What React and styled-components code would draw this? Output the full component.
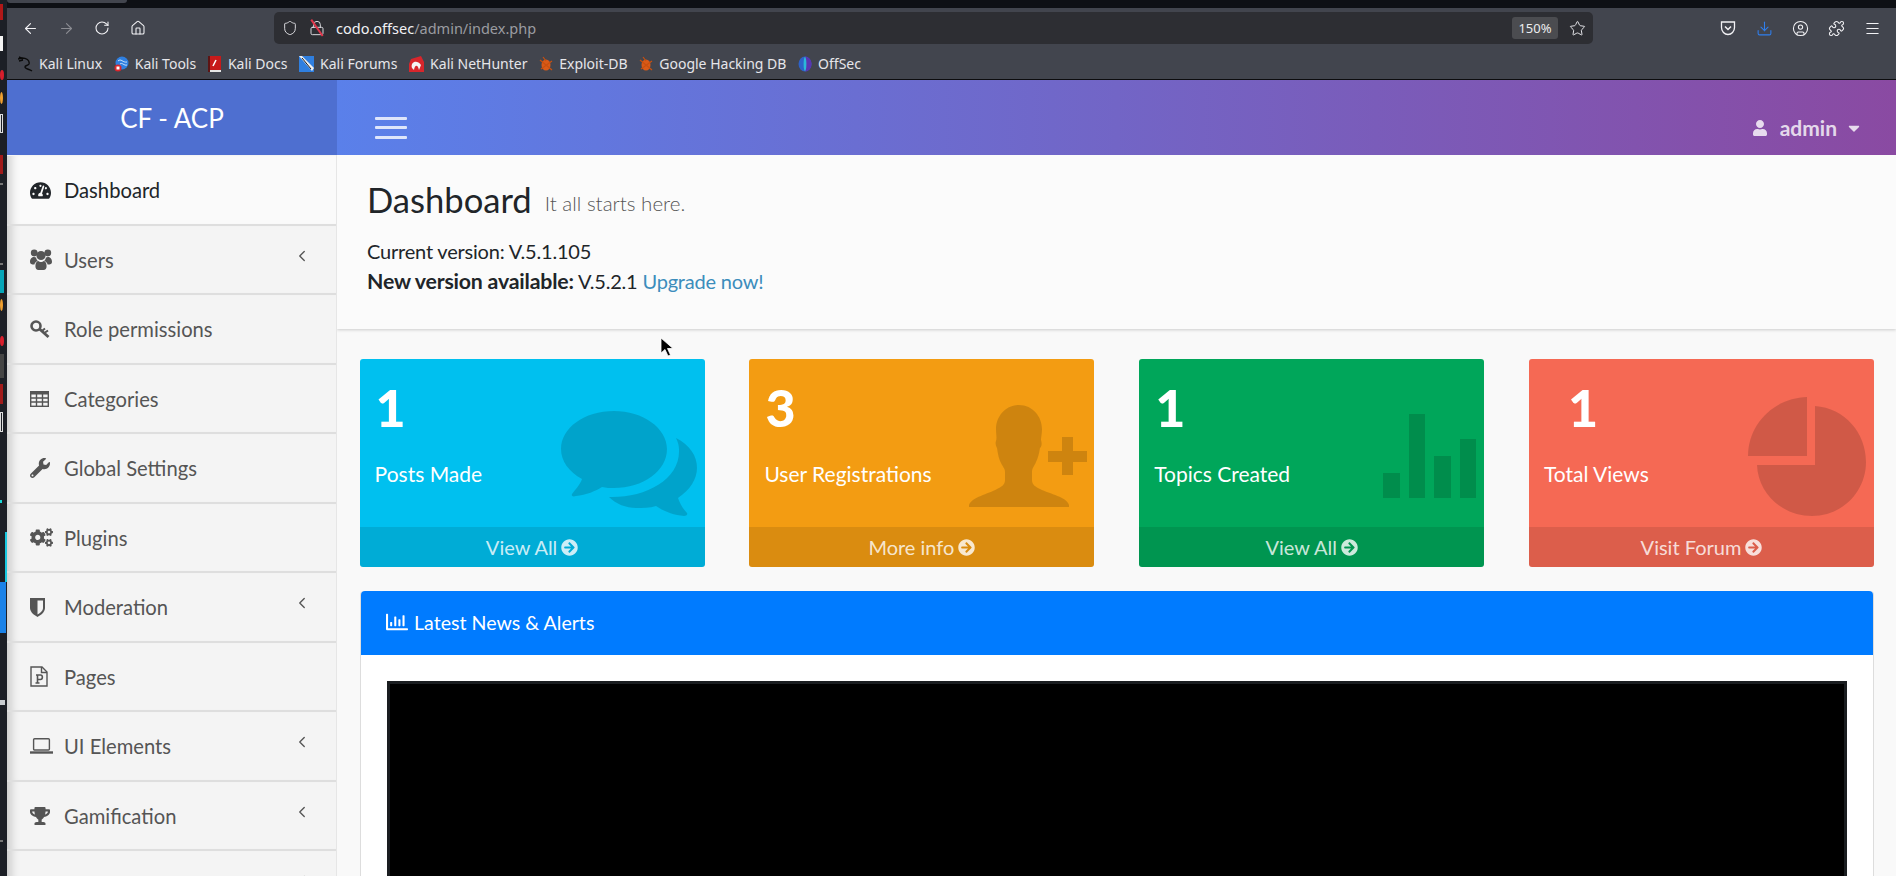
import React from "react";
import styled, { createGlobalStyle } from "styled-components";
import { ArrowLeft, ArrowRight, RotateCw, House, Shield, Lock, Star, Download, CircleUser, Puzzle, Menu, ChevronLeft } from "lucide-react";
import { FaTachometerAlt, FaWrench, FaCogs, FaTrophy, FaUser, FaCaretDown, FaArrowCircleRight, FaRegChartBar } from "react-icons/fa";

const GlobalStyle = createGlobalStyle`
  html, body {
    margin: 0;
    height: 100%;
    overflow: hidden;
    background: #1c1f26;
  }
  * { box-sizing: border-box; }
`;

const sans = `Lato, "Noto Sans", sans-serif`;

const Screen = styled.div`
  display: flex;
  width: 1896px;
  height: 876px;
  overflow: hidden;
  font-family: ${sans};
`;

const DesktopStrip = styled.div`
  position: relative;
  flex: 0 0 7px;
  background: #1c1f26;
`;

const StripMark = styled.span`
  position: absolute;
  left: ${(p) => p.$left || 0}px;
  top: ${(p) => p.$top}px;
  width: ${(p) => p.$w || 3}px;
  height: ${(p) => p.$h}px;
  background: ${(p) => p.$color};
  border-radius: ${(p) => (p.$round ? "50%" : "0")};
  border: ${(p) => (p.$outline ? "1px solid #ddd" : "none")};
`;

const Window = styled.div`
  flex: 1;
  display: flex;
  flex-direction: column;
  min-width: 0;
`;

const TabStrip = styled.div`
  flex: 0 0 8px;
  background: #0e1015;
`;

const TabEdge = styled.div`
  width: 120px;
  height: 3px;
  background: #42454e;
  border-radius: 0 0 3px 3px;
`;

const Chrome = styled.div`
  background: #42454e;
  border-bottom: 1px solid #0c0c0e;
  font-family: "Noto Sans", sans-serif;
`;

const Toolbar = styled.div`
  display: flex;
  align-items: center;
  height: 40px;
  padding: 4px 6px 4px 5px;
`;

const IconGroup = styled.div`
  display: flex;
  align-items: center;
`;

const ToolButton = styled.div`
  display: flex;
  align-items: center;
  justify-content: center;
  width: 36px;
  height: 32px;
  color: ${(p) => p.$color || "#f2f2f5"};
`;

const UrlBar = styled.div`
  display: flex;
  align-items: center;
  width: 1319px;
  height: 32px;
  margin-left: 118px;
  margin-right: 117px;
  padding: 0 7px 0 8px;
  border-radius: 5px;
  background: #2d2e33;
  color: #e4e4e8;
  font-size: 14.5px;
`;

const UrlIcons = styled.div`
  display: flex;
  align-items: center;
  gap: 11px;
  margin-right: 11px;
`;

const LockWrap = styled.span`
  position: relative;
  display: flex;
  width: 16px;
  height: 16px;
`;

const LockSlash = styled.span`
  position: absolute;
  left: 7px;
  top: -2px;
  width: 1.5px;
  height: 20px;
  background: #e0354a;
  transform: rotate(-35deg);
`;

const UrlHost = styled.span`
  color: #f2f2f5;
`;

const UrlPath = styled.span`
  color: #9b9ca1;
  flex: 1;
`;

const ZoomBadge = styled.span`
  display: flex;
  align-items: center;
  justify-content: center;
  width: 46px;
  height: 22px;
  margin-right: 11px;
  border-radius: 3px;
  background: #4b4c50;
  font-size: 13px;
  color: #ececee;
`;

const Bookmarks = styled.div`
  display: flex;
  align-items: center;
  gap: 11.7px;
  height: 31px;
  padding: 0 0 0 11px;
`;

const Bookmark = styled.div`
  display: flex;
  align-items: center;
  gap: 6px;
  color: #e6e6ea;
  font-size: 14px;
`;

const Page = styled.div`
  position: relative;
  flex: 1;
  display: grid;
  grid-template-columns: 330px 1fr;
  grid-template-rows: 75px 1fr;
  min-height: 0;
  background: #f9f9f9;
`;

const Brand = styled.div`
  display: flex;
  align-items: center;
  justify-content: center;
  background: #4e6fd0;
  color: #fff;
  font-size: 26px;
`;

const Navbar = styled.div`
  display: flex;
  align-items: center;
  justify-content: space-between;
  padding: 20px 33px 0 38px;
  background: linear-gradient(90deg, #5a80ea, #8a4aa2);
`;

const Burger = styled.div`
  display: flex;
  flex-direction: column;
  gap: 6.5px;
  width: 32px;
`;

const BurgerLine = styled.span`
  height: 3px;
  border-radius: 1px;
  background: rgba(255, 255, 255, 0.8);
`;

const UserMenu = styled.div`
  display: flex;
  align-items: center;
  color: rgba(255, 255, 255, 0.8);
  font-size: 21px;
  font-weight: 700;
`;

const UserName = styled.span`
  margin: 0 8px 0 12px;
`;

const Sidebar = styled.div`
  padding-top: 1px;
  background: #f4f4f4;
  border-right: 1px solid #e6e6e6;
  overflow: hidden;
`;

const NavRow = styled.div`
  position: relative;
  display: flex;
  align-items: center;
  height: 69.5px;
  padding: 1px 0 0 23px;
  border-bottom: 2px solid #dedede;
  background: ${(p) => (p.$active ? "#fafafa" : "#f4f4f4")};
  box-shadow: inset 12px 0 10px -8px rgba(0, 0, 0, 0.18);
  color: ${(p) => (p.$active ? "#212529" : "#555")};
  font-size: 20.2px;
`;

const NavIcon = styled.span`
  display: flex;
  align-items: center;
  flex: 0 0 34px;
  font-size: 21px;
`;

const NavChevron = styled.span`
  position: absolute;
  left: 286px;
  top: 21px;
  display: flex;
`;

const Content = styled.div`
  min-width: 0;
  overflow: hidden;
`;

const ContentHeader = styled.div`
  display: flex;
  flex-direction: column;
  height: 174px;
  padding: 22px 30px 0;
  background: #fbfbfb;
  box-shadow: 0 1px 3px rgba(0, 0, 0, 0.18);
  color: #212529;
  font-size: 20px;
`;

const Title = styled.h1`
  margin: 0 0 10px;
  font-size: 34.6px;
  font-weight: 400;
  line-height: 45px;
`;

const TitleNote = styled.small`
  margin-left: 13px;
  color: #555;
  font-size: 20.5px;
  font-weight: 300;
  vertical-align: 2px;
`;

const VersionLine = styled.div`
  height: 30px;
  line-height: 30px;
  letter-spacing: -0.2px;
`;

const VersionLabel = styled.strong`
  font-size: 21.3px;
`;

const UpgradeLink = styled.a`
  color: #3c8dbc;
  text-decoration: none;
`;

const Boxes = styled.div`
  display: grid;
  grid-template-columns: repeat(4, 345px);
  justify-content: space-between;
  padding: 30px 22px 0 22.6px;
`;

const Box = styled.div`
  position: relative;
  display: flex;
  flex-direction: column;
  height: 208px;
  border-radius: 3px;
  overflow: hidden;
  background: ${(p) => p.$bg};
  color: #fff;
`;

const BoxBody = styled.div`
  flex: 1;
  padding: 15px 15px 0;
`;

const BoxNumber = styled.div`
  font-size: 52px;
  font-weight: 900;
  line-height: 66px;
  padding-left: ${(p) => (p.$indent ? 24 : 1)}px;
`;

const BoxLabel = styled.div`
  margin-top: 21px;
  font-size: 21px;
`;

const BoxArt = styled.svg`
  position: absolute;
  top: 0;
  left: 0;
  width: 345px;
  height: 168px;
  fill: rgba(0, 0, 0, 0.15);
`;

const BoxFooter = styled.div`
  display: flex;
  align-items: center;
  justify-content: center;
  gap: 4px;
  height: 40px;
  background: rgba(0, 0, 0, 0.1);
  color: rgba(255, 255, 255, 0.8);
  font-size: 20px;
`;

const Panel = styled.div`
  margin: 24px 22px 0 23px;
  border: 1px solid #ddd;
  border-top: none;
  border-radius: 4px 4px 0 0;
  background: #fff;
`;

const PanelHeader = styled.div`
  display: flex;
  align-items: center;
  gap: 6px;
  height: 64px;
  padding: 0 0 2px 25px;
  border-radius: 4px 4px 0 0;
  background: #007bff;
  color: #fff;
  font-size: 19.6px;
`;

const PanelBody = styled.div`
  padding: 26px 26px 0 26px;
`;

const VideoFrame = styled.div`
  height: 400px;
  border: 3px solid #1a1d20;
  background: #000;
`;

const Cursor = styled.svg`
  position: absolute;
  left: 653px;
  top: 257px;
  width: 14px;
  height: 20px;
`;

// fa4 glyphs that the fa5 set in react-icons draws differently
const UsersIcon = () => (
  <svg width="22" height="21" viewBox="0 0 22 21" fill="currentColor">
    <circle cx="4.2" cy="4" r="3.4" />
    <circle cx="17.8" cy="4" r="3.4" />
    <circle cx="11" cy="6.5" r="4.6" />
    <path d="M0 13 C0 9.5 2 8 4 8 C5 8 5.6 8.3 6.2 8.8 C6.2 10 7 11.2 7.8 12 C5.8 12.6 4.6 14 4.4 15.6 C1.6 15.6 0 15 0 13Z" />
    <path d="M22 13 C22 9.5 20 8 18 8 C17 8 16.4 8.3 15.8 8.8 C15.8 10 15 11.2 14.2 12 C16.2 12.6 17.4 14 17.6 15.6 C20.4 15.6 22 15 22 13Z" />
    <path d="M5.4 17 C5.4 13.5 7 12 8.4 12 C9 12.7 10 13 11 13 C12 13 13 12.7 13.6 12 C15 12 16.6 13.5 16.6 17 C16.6 19.5 15.5 21 13.5 21 H8.5 C6.5 21 5.4 19.5 5.4 17Z" />
  </svg>
);

const KeyIcon = () => (
  <svg width="20" height="19" viewBox="0 0 20 19" fill="none" stroke="currentColor">
    <circle cx="6" cy="6" r="4.5" strokeWidth="2.6" />
    <path d="M9.5 9 L18.5 17" strokeWidth="2.8" />
    <path d="M15 12.5 L18 10.5 M12.5 10.5 L15 8.5" strokeWidth="2" />
  </svg>
);

const TableIcon = () => (
  <svg width="19" height="16" viewBox="0 0 19 16" fill="none" stroke="currentColor" strokeWidth="1.4">
    <rect x="0.7" y="0.7" width="17.6" height="14.6" />
    <path d="M0 2 H19" strokeWidth="3" />
    <path d="M0 7 H19 M0 11 H19 M6.5 3 V16 M12.5 3 V16" />
  </svg>
);

const ShieldIcon = () => (
  <svg width="15" height="19" viewBox="0 0 15 19">
    <path d="M0 0 H15 V10 C15 14.5 10 17.5 7.5 19 C5 17.5 0 14.5 0 10 Z" fill="currentColor" />
    <path d="M7.5 2.5 H13 V10 C13 13 9.5 15.5 7.5 16.6 Z" fill="#f4f4f4" />
  </svg>
);

const PageIcon = () => (
  <svg width="18" height="21" viewBox="0 0 18 21" fill="none" stroke="currentColor">
    <path d="M1 1 H12 L17 6 V20 H1 Z" strokeWidth="1.4" />
    <path d="M11.5 1 V6.5 H17" strokeWidth="1.4" />
    <path d="M6 9 H10.5 C13 9 13 13.5 10.5 13.5 H7.5 M7.5 9 V17 M5.5 17 H9.5" strokeWidth="1.6" />
  </svg>
);

const LaptopIcon = () => (
  <svg width="23" height="16" viewBox="0 0 23 16" fill="none" stroke="currentColor">
    <rect x="3.6" y="0.7" width="15.8" height="11.3" rx="1" strokeWidth="1.4" />
    <path d="M0 14.5 H23" strokeWidth="2.4" />
  </svg>
);

const navItems = [
  { label: "Dashboard", icon: <FaTachometerAlt />, active: true },
  { label: "Users", icon: <UsersIcon />, more: true },
  { label: "Role permissions", icon: <KeyIcon /> },
  { label: "Categories", icon: <TableIcon /> },
  { label: "Global Settings", icon: <FaWrench size={20} /> },
  { label: "Plugins", icon: <FaCogs size={23} /> },
  { label: "Moderation", icon: <ShieldIcon />, more: true },
  { label: "Pages", icon: <PageIcon /> },
  { label: "UI Elements", icon: <LaptopIcon />, more: true },
  { label: "Gamification", icon: <FaTrophy size={20} />, more: true },
  { label: "", more: true },
];

const stripMarks = [
  { top: 4, h: 16, w: 3, color: "#b01818" },
  { top: 36, h: 15, w: 3, color: "#f5f5f5" },
  { top: 70, h: 10, w: 4, color: "#d81e2c", round: true },
  { top: 92, h: 12, w: 3, color: "#f0a030", round: true },
  { top: 114, h: 19, w: 3, outline: true, color: "transparent" },
  { top: 155, h: 19, w: 3, color: "#a01a1a" },
  { top: 183, h: 2, w: 3, color: "#777" },
  { top: 263, h: 2, w: 3, color: "#777" },
  { top: 270, h: 23, w: 4, color: "#06a5b8" },
  { top: 299, h: 12, w: 3, color: "#f0a030", round: true },
  { top: 336, h: 10, w: 4, color: "#d81e2c", round: true },
  { top: 354, h: 24, w: 4, color: "#444" },
  { top: 384, h: 20, w: 3, color: "#a01a1a" },
  { top: 412, h: 20, w: 3, outline: true, color: "transparent" },
  { top: 500, h: 3, w: 2, color: "#18d8d8" },
  { top: 532, h: 50, w: 2, left: 5, color: "#18c8e0" },
  { top: 582, h: 51, w: 6, color: "#1a82e8" },
  { top: 700, h: 5, w: 5, color: "#c8ccd0" },
  { top: 840, h: 2, w: 3, color: "#777" },
];

const Favicon = ({ name }) => {
  if (name === "linux") {
    return (
      <svg width="15" height="16" viewBox="0 0 15 16" fill="none" stroke="#0b0b0b" strokeWidth="1.4">
        <path d="M0 3 L4 2 C8 2 12 4 11 8 C10 10 7 9 7 11 C7 13 11 13 14 15" />
        <path d="M1 1 L5 3 M1 5 L5 4" />
      </svg>
    );
  }
  if (name === "tools") {
    return (
      <svg width="15" height="16" viewBox="0 0 15 16">
        <circle cx="8" cy="7" r="6.5" fill="#2f7fe0" />
        <path d="M4 5 C7 2 9 7 13 6 M6 8 C8 6 10 10 13 9" stroke="#cfe4fb" fill="none" />
        <circle cx="4" cy="12" r="3.5" fill="#d8262c" />
        <rect x="2.5" y="10.5" width="3" height="3" fill="#fff" />
      </svg>
    );
  }
  if (name === "docs") {
    return (
      <svg width="14" height="16" viewBox="0 0 14 16">
        <rect x="1" y="0" width="12" height="14" fill="#c71a1a" />
        <rect x="1" y="14" width="12" height="2" fill="#e6e6e6" />
        <rect x="0" y="0" width="2" height="16" fill="#5d1414" />
        <path d="M8 4 L5 10" stroke="#fff" strokeWidth="1.5" />
      </svg>
    );
  }
  if (name === "forums") {
    return (
      <svg width="15" height="16" viewBox="0 0 15 16">
        <path d="M0 0 H15 V16 H0 Z" fill="#2f7fe0" />
        <path d="M0 0 L3 0 L15 12 L13 15 Z" fill="#f0f0f0" />
        <path d="M3 2 L12 13" stroke="#1c1c1c" strokeWidth="1" />
      </svg>
    );
  }
  if (name === "nethunter") {
    return (
      <svg width="15" height="16" viewBox="0 0 15 16">
        <path d="M2 3 L12 0 L15 6 V16 H0 V8 Z" fill="#d8262c" />
        <path d="M3 12 C1 6 8 3 12 9 L10 14 C9 9 6 8 5 14 Z" fill="#f4f4f4" />
      </svg>
    );
  }
  if (name === "exploit") {
    return (
      <svg width="14" height="16" viewBox="0 0 14 16">
        <ellipse cx="7" cy="9" rx="4.5" ry="5.5" fill="#d95a18" />
        <path d="M1 4 L13 14 M13 5 L2 13 M4 1 L7 5" stroke="#c9500f" strokeWidth="1.2" />
      </svg>
    );
  }
  return (
    <svg width="14" height="16" viewBox="0 0 14 16">
      <ellipse cx="7" cy="8" rx="6.5" ry="7.5" fill="#2d62c8" />
      <path d="M7 0.5 C11 1 13.5 4 13.5 8 C13.5 12 11 15 7 15.5 Z" fill="#5a35b0" />
      <ellipse cx="7" cy="8" rx="1.4" ry="7" fill="#2bb8d8" />
    </svg>
  );
};

const bookmarks = [
  ["linux", "Kali Linux"],
  ["tools", "Kali Tools"],
  ["docs", "Kali Docs"],
  ["forums", "Kali Forums"],
  ["nethunter", "Kali NetHunter"],
  ["exploit", "Exploit-DB"],
  ["exploit", "Google Hacking DB"],
  ["offsec", "OffSec"],
];

const PocketIcon = () => (
  <svg width="16" height="16" viewBox="0 0 16 16" fill="none" stroke="currentColor" strokeWidth="1.3">
    <path d="M1.5 2 H14.5 V7.5 C14.5 11.5 11.5 14.5 8 14.5 C4.5 14.5 1.5 11.5 1.5 7.5 Z" />
    <path d="M5 6.5 L8 9.5 L11 6.5" strokeWidth="1.5" />
  </svg>
);

const boxes = [
  {
    value: "1",
    label: "Posts Made",
    footer: "View All",
    bg: "#00c0ef",
    view: "360 359 345 168",
    art: (
      <>
        <path d="M614 411 C584 411 561 428 561 449 C561 461 569 472 582 479 C580 485 575 490 572 494 C571 496 573 497 576 496 C586 495 596 491 602 487 C606 488 610 488 614 488 C643 488 667 471 667 449 C667 428 643 411 614 411Z" />
        <path d="M676 438 C690 445 697 456 697 468 C697 479 690 490 678 498 C680 504 684 510 687 513 C688 515 686 516 684 516 C673 515 663 511 656 506 C650 508 643 508 636 508 C626 508 616 504 609 497 C645 498 680 480 679 450 C679 446 678 442 676 438Z" />
      </>
    ),
  },
  {
    value: "3",
    label: "User Registrations",
    footer: "More info",
    bg: "#f39c12",
    view: "749 359 345 168",
    art: (
      <>
        <path d="M1019 405 C1005 405 996 417 996 429 C996 434 997 438 996 441 C995 443 996 446 997 448 C998 455 999 459 1001 463 C1002 466 1005 468 1005 472 L1005 480 C1005 485 1001 487 997 489 C988 494 972 497 969 505 L969 507 L1069 507 L1069 505 C1067 497 1050 494 1040 489 C1036 487 1032 485 1032 480 L1032 472 C1032 468 1035 465 1036 462 C1038 458 1039 454 1040 448 C1042 446 1042 443 1041 440 C1041 437 1042 434 1042 429 C1042 417 1033 405 1019 405Z" />
        <path d="M1062 437 h11 v14 h14 v11 h-14 v13 h-11 v-13 h-14 v-11 h14 Z" />
      </>
    ),
  },
  {
    value: "1",
    label: "Topics Created",
    footer: "View All",
    bg: "#00a65a",
    view: "1139 359 345 168",
    art: (
      <>
        <rect x="1383" y="473" width="17" height="25" />
        <rect x="1409" y="414" width="16" height="84" />
        <rect x="1434" y="456" width="17" height="42" />
        <rect x="1460" y="439" width="16" height="59" />
      </>
    ),
  },
  {
    value: "1",
    label: "Total Views",
    footer: "Visit Forum",
    bg: "#f56954",
    indent: true,
    view: "1529 359 345 168",
    art: (
      <>
        <path d="M1815 406 C1845 408 1866 433 1866 462 C1866 492 1842 516 1812 516 C1782 516 1758 493 1757 465 L1815 465Z" />
        <path d="M1807 397 L1807 456 L1748 456 C1748 424 1774 398 1807 397Z" />
      </>
    ),
  },
];

const App = () => (
  <Screen>
    <GlobalStyle />
    <DesktopStrip>
      {stripMarks.map((m) => (
        <StripMark key={m.top} $top={m.top} $h={m.h} $w={m.w} $left={m.left} $color={m.color} $round={m.round} $outline={m.outline} />
      ))}
    </DesktopStrip>
    <Window>
      <TabStrip>
        <TabEdge />
      </TabStrip>
      <Chrome>
        <Toolbar>
          <IconGroup>
            <ToolButton><ArrowLeft size={17} strokeWidth={1.6} /></ToolButton>
            <ToolButton $color="#8b8c92"><ArrowRight size={17} strokeWidth={1.6} /></ToolButton>
            <ToolButton><RotateCw size={16} strokeWidth={1.6} /></ToolButton>
            <ToolButton><House size={16} strokeWidth={1.6} /></ToolButton>
          </IconGroup>
          <UrlBar>
            <UrlIcons>
              <Shield size={16} strokeWidth={1.4} />
              <LockWrap>
                <Lock size={16} strokeWidth={1.4} />
                <LockSlash />
              </LockWrap>
            </UrlIcons>
            <UrlHost>codo.offsec</UrlHost>
            <UrlPath>/admin/index.php</UrlPath>
            <ZoomBadge>150%</ZoomBadge>
            <Star size={17} strokeWidth={1.4} />
          </UrlBar>
          <IconGroup>
            <ToolButton><PocketIcon /></ToolButton>
            <ToolButton $color="#2f7fee"><Download size={17} strokeWidth={1.5} /></ToolButton>
            <ToolButton><CircleUser size={17} strokeWidth={1.5} /></ToolButton>
            <ToolButton><Puzzle size={17} strokeWidth={1.5} /></ToolButton>
            <ToolButton><Menu size={17} strokeWidth={1.5} /></ToolButton>
          </IconGroup>
        </Toolbar>
        <Bookmarks>
          {bookmarks.map(([icon, label]) => (
            <Bookmark key={label}>
              <Favicon name={icon} />
              {label}
            </Bookmark>
          ))}
        </Bookmarks>
      </Chrome>
      <Page>
        <Brand>CF - ACP</Brand>
        <Navbar>
          <Burger>
            <BurgerLine />
            <BurgerLine />
            <BurgerLine />
          </Burger>
          <UserMenu>
            <FaUser size={16} />
            <UserName>admin</UserName>
            <FaCaretDown size={18} />
          </UserMenu>
        </Navbar>
        <Sidebar>
          {navItems.map((item, i) => (
            <NavRow key={i} $active={item.active}>
              <NavIcon>{item.icon}</NavIcon>
              {item.label}
              {item.more && (
                <NavChevron>
                  <ChevronLeft size={18} strokeWidth={1.8} />
                </NavChevron>
              )}
            </NavRow>
          ))}
        </Sidebar>
        <Content>
          <ContentHeader>
            <Title>
              Dashboard<TitleNote>It all starts here.</TitleNote>
            </Title>
            <VersionLine>Current version: V.5.1.105</VersionLine>
            <VersionLine>
              <VersionLabel>New version available:</VersionLabel> V.5.2.1 <UpgradeLink>Upgrade now!</UpgradeLink>
            </VersionLine>
          </ContentHeader>
          <Boxes>
            {boxes.map((box) => (
              <Box key={box.label} $bg={box.bg}>
                <BoxArt viewBox={box.view}>{box.art}</BoxArt>
                <BoxBody>
                  <BoxNumber $indent={box.indent}>{box.value}</BoxNumber>
                  <BoxLabel>{box.label}</BoxLabel>
                </BoxBody>
                <BoxFooter>
                  {box.footer} <FaArrowCircleRight size={17} />
                </BoxFooter>
              </Box>
            ))}
          </Boxes>
          <Panel>
            <PanelHeader>
              <FaRegChartBar size={22} />
              Latest News &amp; Alerts
            </PanelHeader>
            <PanelBody>
              <VideoFrame />
            </PanelBody>
          </Panel>
        </Content>
        <Cursor viewBox="0 0 14 20">
          <path d="M1 1 L1 16 L5 12.5 L8 19 L10.5 18 L7.5 11.5 L13 11.5 Z" fill="#000" stroke="#fff" strokeWidth="0.8" />
        </Cursor>
      </Page>
    </Window>
  </Screen>
);

export default App;
